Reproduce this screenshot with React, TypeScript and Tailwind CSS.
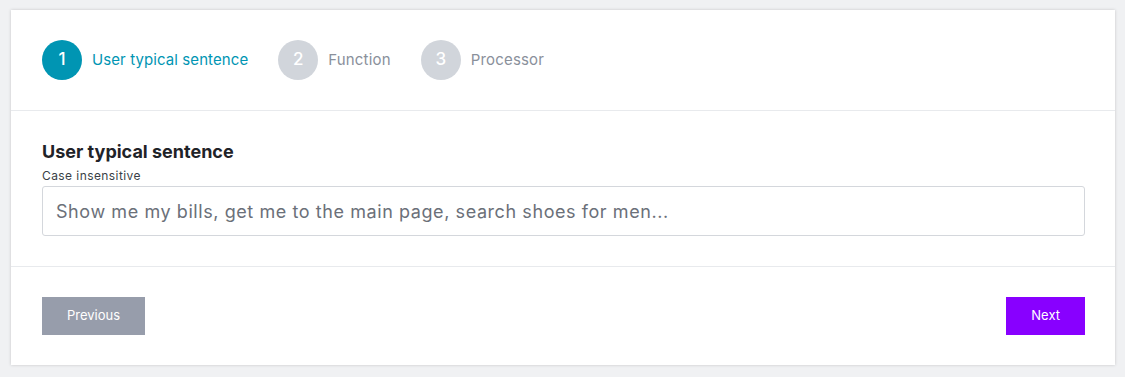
import { useState } from 'react';

/**
 * Wizard de creación de intent — paso 1 de 3
 */
export default function App() {
  const [sentence, setSentence] = useState('');

  const steps = [
    { n: 1, label: 'User typical sentence', active: true },
    { n: 2, label: 'Function', active: false },
    { n: 3, label: 'Processor', active: false },
  ];

  return (
    <div
      className="min-h-[377px] w-full bg-[#f0f1f3] pt-[10px] pl-[11px]"
      style={{ fontFamily: 'Inter, "Noto Sans", sans-serif' }}
    >
      <div className="w-[1104px] bg-white shadow-[0_0_3px_rgba(0,0,0,0.18)]">
        {/* Stepper */}
        <div className="flex items-center gap-[30px] pl-[31px] pr-[30px] py-[30px] border-b border-[#e8eaed]">
          {steps.map((s) => (
            <div key={s.n} className="flex items-center gap-[10px]">
              <div
                className={
                  s.active
                    ? 'w-[40px] h-[40px] rounded-full bg-[#0095b3] text-white flex items-center justify-center text-[17px] font-medium'
                    : 'w-[40px] h-[40px] rounded-full bg-[#d1d5db] text-white flex items-center justify-center text-[17px] font-medium'
                }
              >
                {s.n}
              </div>
              <span
                className={
                  s.active
                    ? 'text-[15px] tracking-[0.006em] text-[#0095b3]'
                    : 'text-[15px] tracking-[0.012em] text-[#8a909b]'
                }
              >
                {s.label}
              </span>
            </div>
          ))}
        </div>

        {/* Campo principal */}
        <div className="pl-[31px] pr-[30px] pt-[31px] pb-[30px] border-b border-[#e8eaed]">
          <h3 className="text-[18px] leading-[20px] font-bold text-[#1f2328]">
            User typical sentence
          </h3>
          <p className="text-[12px] leading-[16px] tracking-[0.035em] text-[#3a3f47] mt-[6px] mb-[2px]">
            Case insensitive
          </p>
          <input
            value={sentence}
            onChange={(e) => setSentence(e.target.value)}
            placeholder="Show me my bills, get me to the main page, search shoes for men..."
            className="w-full h-[50px] border border-[#d4d7dc] rounded-[3px] px-[13px] text-[18px] tracking-[0.032em] text-[#1f2328] placeholder:text-[#6b7079] outline-none"
          />
        </div>

        {/* Navegación */}
        <div className="flex justify-between pl-[31px] pr-[30px] pt-[30px] pb-[30px]">
          <button className="h-[38px] px-[25px] bg-[#979dab] text-white text-[13px]">
            Previous
          </button>
          <button className="h-[38px] px-[25px] bg-[#8800ff] text-white text-[13px]">
            Next
          </button>
        </div>
      </div>
    </div>
  );
}
